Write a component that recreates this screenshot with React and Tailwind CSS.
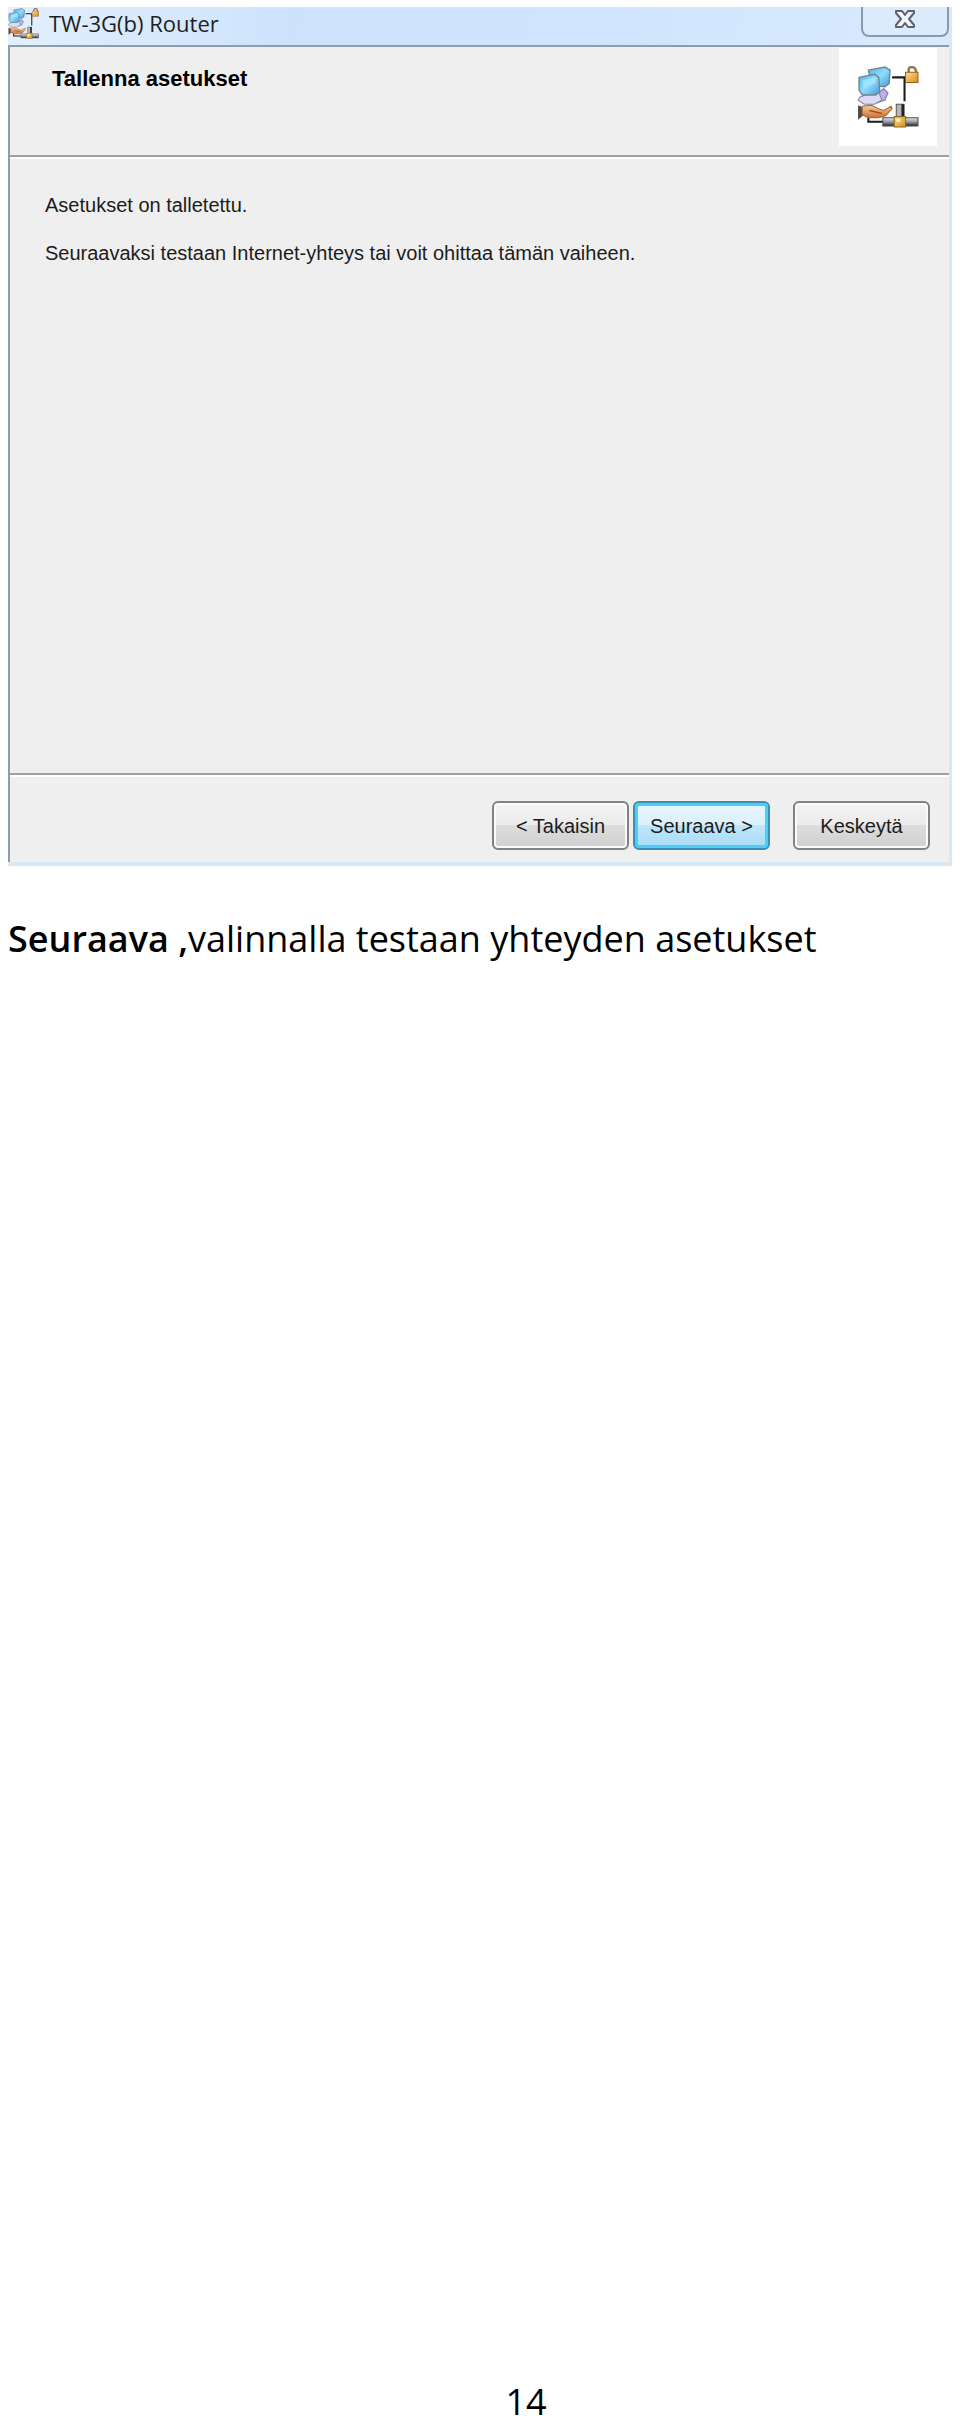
import React from "react";

function NetworkIcon({ className }) {
  return (
    <svg viewBox="0 0 60 60" className={className} aria-hidden="true">
      <defs>
        <linearGradient id="screen" x1="0" y1="0" x2="1" y2="1">
          <stop offset="0" stopColor="#4fb4ee" />
          <stop offset="0.5" stopColor="#8ddcfb" />
          <stop offset="1" stopColor="#3f9be0" />
        </linearGradient>
        <linearGradient id="gold" x1="0" y1="0" x2="1" y2="1">
          <stop offset="0" stopColor="#ffe08a" />
          <stop offset="1" stopColor="#d98a1c" />
        </linearGradient>
        <linearGradient id="skin" x1="0" y1="0" x2="0" y2="1">
          <stop offset="0" stopColor="#f7cf9f" />
          <stop offset="1" stopColor="#c9702e" />
        </linearGradient>
        <linearGradient id="pipe" x1="0" y1="0" x2="0" y2="1">
          <stop offset="0" stopColor="#e8e8ec" />
          <stop offset="0.5" stopColor="#9a9aa2" />
          <stop offset="1" stopColor="#25252a" />
        </linearGradient>
      </defs>

      {/* cable */}
      <path d="M34 11H46V34M11 47V54H25" fill="none" stroke="#1c1c1c" strokeWidth="2" />

      {/* monitors */}
      <path d="M19 27L26 22L30 26L27 33L18 36Z" fill="#b9aee6" stroke="#77739c" />
      <path d="M11 4L27 1L32 4L31 17L27 20L15 19Z" fill="url(#screen)" stroke="#71858f" strokeWidth="1.4" />
      <path d="M11 27L21 25L24 33L17 37H7L1 33L3 30Z" fill="#ded9f5" stroke="#85849a" />
      <path d="M2 11L17 8L21 11L22 25L18 28L5 28L2 23Z" fill="url(#screen)" stroke="#71858f" strokeWidth="1.4" />
      <path d="M5 14L17 11L18 16L6 22Z" fill="#b4ebff" opacity="0.6" />

      {/* hand */}
      <path d="M1 38L6 40V48L1 52Z" fill="#4b4b50" />
      <path d="M5 39L14 38L20 41L26 43L33 39L34 41L28 48L21 50H11L5 47Z" fill="url(#skin)" stroke="#a4632f" />
      <path d="M12 43L24 46" stroke="#a4501f" strokeWidth="1.4" />

      {/* padlock */}
      <path d="M50 9V4Q50 1 53 1T57 4V9" fill="none" stroke="#8a7a52" strokeWidth="2.4" />
      <path d="M47 6H59V16H47Z" fill="url(#gold)" stroke="#94631c" />

      {/* junction */}
      <path d="M38 37H45V50H38Z" fill="#b6b6bc" stroke="#55555a" />
      <path d="M43 37H46V49H43Z" fill="#232326" />
      <path d="M25 50H59V58H25Z" fill="url(#pipe)" stroke="#4a4a50" />
      <path d="M36 49H47V59H36Z" fill="url(#gold)" stroke="#8d6a1f" />
      <path d="M38 51H42V54H38Z" fill="#fff3bd" />
    </svg>
  );
}

function CloseIcon() {
  return (
    <svg viewBox="0 0 22 20" className="h-5 w-[22px]" aria-hidden="true">
      <path
        d="M2 2H8L11 6L14 2H20V4L15 10L20 16V18H14L11 14L8 18H2V16L7 10L2 4Z"
        fill="#f3f4f7"
        stroke="#5c6270"
        strokeWidth="2"
        strokeLinejoin="round"
      />
    </svg>
  );
}

const buttonBase = "h-[49px] w-[137px] rounded-md border-2 text-xl text-[#1c1c1c]";
const buttonGray =
  "border-[#828282] bg-[linear-gradient(#f3f3f3_0%,#ebebeb_50%,#dddddd_50%,#cfcfcf_100%)] shadow-[inset_0_0_0_2px_#fafafa]";
const buttonBlue =
  "border-[#3a8fb5] bg-[linear-gradient(#e9f6fd_0%,#d9f0fc_50%,#bee6fd_50%,#a9dbf5_100%)] shadow-[inset_0_0_0_3px_#4ccdf5]";

export default function App() {
  return (
    <div className="flex min-h-screen flex-col bg-white pt-[7px] pr-2 pl-2 text-black">
      <section className="border-r-[3px] border-b-4 border-[#d9e8f7] font-['Liberation_Sans',Arial,sans-serif]">
        <header className="flex h-[38px] items-start justify-between bg-[linear-gradient(100deg,#e3effc,#cde3fc_30%,#cfe5fd_60%,#d8eafd)]">
          <div className="flex items-center gap-2.5">
            <NetworkIcon className="size-[31px]" />
            <h1 className="font-['Open_Sans',sans-serif] text-[22px] leading-8 text-[#1e1e1e]">
              TW-3G(b) Router
            </h1>
          </div>
          <button
            type="button"
            aria-label="Sulje"
            className="flex h-[30px] w-[88px] items-start justify-center rounded-b-lg border-2 border-t-0 border-[#8c98ab] bg-[#dcebfc] pt-0.5"
          >
            <CloseIcon />
          </button>
        </header>

        <div className="border-t-2 border-l-2 border-[#8e9cab] bg-[#efefef]">
          <div className="flex h-[110px] items-start justify-between border-b-2 border-[#a0a0a0] pr-3 pl-[42px]">
            <h2 className="pt-[18px] text-[22px] leading-7 font-bold">Tallenna asetukset</h2>
            <div className="mt-px flex size-[98px] items-center justify-center bg-white">
              <NetworkIcon className="size-[62px]" />
            </div>
          </div>

          <div className="h-[618px] space-y-5 border-t-2 border-b-2 border-t-white border-b-[#a0a0a0] px-[35px] pt-8 text-xl leading-7 text-[#1c1c1c]">
            <p>Asetukset on talletettu.</p>
            <p>Seuraavaksi testaan Internet-yhteys tai voit ohittaa tämän vaiheen.</p>
          </div>

          <div className="flex justify-end border-t-2 border-white pt-6 pr-[19px] pb-3">
            <button type="button" className={`${buttonBase} ${buttonGray}`}>
              &lt; Takaisin
            </button>
            <button type="button" className={`ml-1 ${buttonBase} ${buttonBlue}`}>
              Seuraava &gt;
            </button>
            <button type="button" className={`ml-[23px] ${buttonBase} ${buttonGray}`}>
              Keskeytä
            </button>
          </div>
        </div>
      </section>

      <p className="mt-12 font-['Open_Sans',sans-serif] text-[36px] leading-[50px]">
        <strong className="font-semibold">Seuraava ,</strong>valinnalla testaan yhteyden asetukset
      </p>

      <footer className="mt-auto pl-[92px] text-center font-['Open_Sans',sans-serif] text-[36px] leading-10">
        14
      </footer>
    </div>
  );
}
